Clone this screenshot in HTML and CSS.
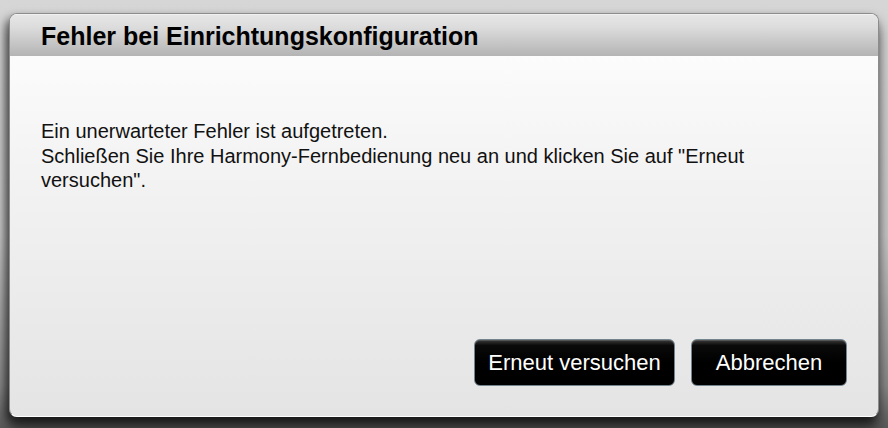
FILE: index.html
```html
<!DOCTYPE html>
<html lang="de">
<head>
<meta charset="utf-8">
<link rel="stylesheet" href="styles.css">
</head>
<body>
<div class="dialog">
  <div class="header"><h1 class="title">Fehler bei Einrichtungskonfiguration</h1></div>
  <div class="content">
    <p class="message">Ein unerwarteter Fehler ist aufgetreten.<br>Schließen Sie Ihre Harmony-Fernbedienung neu an und klicken Sie auf "Erneut versuchen".</p>
    <div class="actions">
      <button class="btn btn-retry">Erneut versuchen</button>
      <button class="btn btn-cancel">Abbrechen</button>
    </div>
  </div>
</div>
</body>
</html>
```
FILE: styles.css
```css
html, body { height: 100%; }
body {
  margin: 0;
  padding: 13px 9px 11px 9px;
  box-sizing: border-box;
  background: linear-gradient(to bottom, #d6d6d6 0%, #c8c8c8 55%, #8a8a8a 90%, #5a5a5a 100%);
  font-family: "Liberation Sans", Arial, sans-serif;
  overflow: hidden;
}
.dialog {
  height: 100%;
  display: flex;
  flex-direction: column;
  border-radius: 8px;
  border: 1px solid #8c8c8c;
  border-bottom-color: #ffffff;
  box-sizing: border-box;
  overflow: hidden;
  box-shadow: -3px 5px 10px rgba(0,0,0,0.55), 0 12px 14px rgba(0,0,0,0.5);
  background: linear-gradient(to bottom, #ffffff 0%, #f4f4f4 35%, #e4e4e4 100%);
}
.header {
  height: 41px;
  flex: none;
  background: linear-gradient(to bottom, #e6e6e6 0%, #dcdcdc 30%, #b4b4b4 100%);
  border-top: 1px solid #f2f2f2;
  display: flex;
  align-items: center;
  padding-left: 31px;
}
.title {
  margin: 0;
  font-size: 25px;
  font-weight: bold;
  color: #000;
  line-height: 28px;
}
.content {
  flex: 1;
  display: flex;
  flex-direction: column;
  padding: 0 31px 30px 31px;
}
.message {
  margin: 63px 0 0 0;
  font-size: 20px;
  line-height: 24.5px;
  color: #111;
}
.actions {
  margin-top: auto;
  display: flex;
  justify-content: flex-end;
  gap: 16px;
}
.btn {
  height: 47px;
  border-radius: 6px;
  border: 1px solid #74848f;
  background: linear-gradient(to bottom, #3a3a3a 0%, #0a0a0a 12%, #000 50%, #000 100%);
  color: #fff;
  font-family: "Liberation Sans", Arial, sans-serif;
  font-size: 22px;
  padding: 0;
  box-shadow: inset 0 1px 0 rgba(255,255,255,0.15);
}
.btn-retry { width: 201px; }
.btn-cancel { width: 156px; }
```
